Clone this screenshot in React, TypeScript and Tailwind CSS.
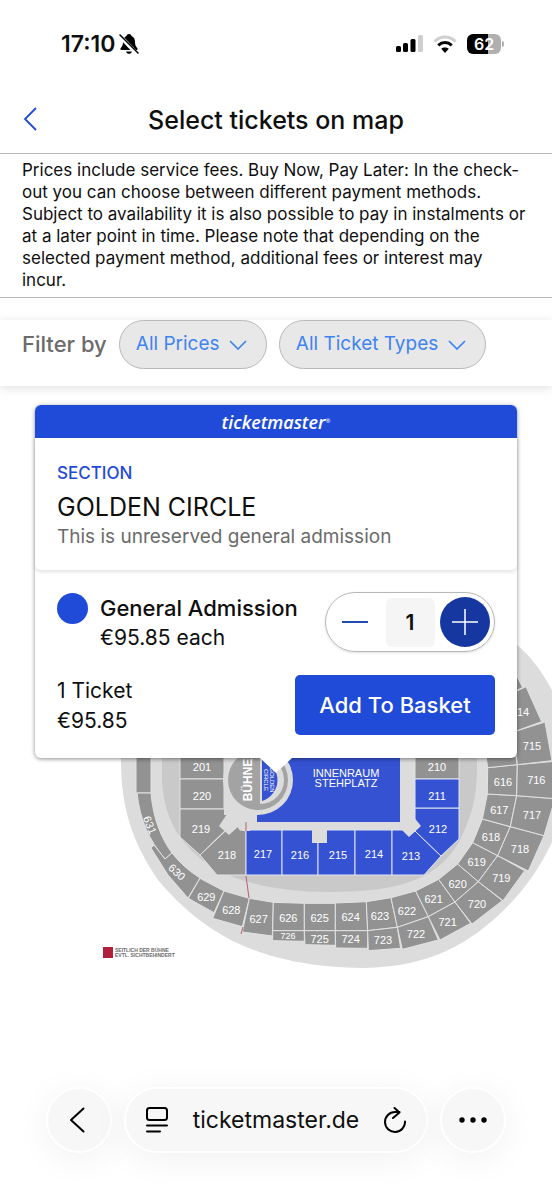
import { useState } from 'react';

const PRICE = 95.85;

type Block = {
    id: string;
    points: string;
    x: number;
    y: number;
    size?: number;
};

// west side of the upper tier, in thirds of a map unit
const westBlocks: Block[] = [
    { id: '629', points: '330,415 402,453 372,518 295,475', x: 349, y: 471 },
    { id: '628', points: '402,453 478,475 457,560 368,535', x: 424, y: 512 },
    { id: '627', points: '478,475 550,487 547,588 457,576', x: 506, y: 538 },
    { id: '626', points: '550,487 643,490 643,572 548,572', x: 595, y: 534 },
    { id: '726', points: '548,572 643,572 643,604 548,602', x: 594, y: 585, size: 27 },
    { id: '625', points: '643,490 736,490 736,572 643,572', x: 689, y: 534 },
    { id: '725', points: '643,572 736,572 736,616 645,614', x: 689, y: 597 },
];

// east side of the upper tier, in thirds of a map unit
const eastBlocks: Block[] = [
    { id: '624', points: '46,489 139,485 143,572 46,572', x: 92, y: 532 },
    { id: '724', points: '46,572 143,572 143,625 47,624', x: 92, y: 598 },
    { id: '623', points: '139,485 213,473 232,562 143,572', x: 180, y: 528 },
    { id: '723', points: '143,572 232,562 242,625 145,632', x: 189, y: 600 },
    { id: '622', points: '213,473 287,453 325,530 232,562', x: 261, y: 513 },
    { id: '722', points: '232,562 325,530 355,600 247,628', x: 288, y: 583 },
    { id: '621', points: '287,453 356,418 405,486 325,530', x: 341, y: 478 },
    { id: '721', points: '325,530 405,486 452,550 360,600', x: 383, y: 546 },
    { id: '620', points: '356,418 413,372 475,425 405,486', x: 413, y: 432 },
    { id: '720', points: '405,486 475,425 547,482 456,552', x: 471, y: 492 },
    { id: '619', points: '413,372 458,308 533,347 475,425', x: 470, y: 367 },
    { id: '719', points: '475,425 533,347 614,392 549,482', x: 544, y: 416 },
    { id: '618', points: '458,308 487,237 571,260 533,347', x: 513, y: 291 },
    { id: '718', points: '533,347 571,260 672,287 625,393', x: 600, y: 327 },
    { id: '617', points: '487,237 502,162 590,167 571,260', x: 538, y: 210 },
    { id: '717', points: '571,260 590,167 705,176 672,287', x: 636, y: 226 },
    { id: '616', points: '502,162 503,83 592,74 590,167', x: 549, y: 126 },
    { id: '716', points: '590,167 592,74 705,64 705,176', x: 649, y: 122 },
    { id: '615', points: '503,83 494,20 580,0 592,74', x: 541, y: 38 },
    { id: '715', points: '592,74 580,-24 675,-54 696,62', x: 636, y: 18 },
    { id: '714', points: '580,-24 555,-130 618,-160 665,-55', x: 600, y: -82 },
    { id: '713', points: '555,-130 520,-230 560,-250 608,-158', x: 560, y: -190 },
];

const innerBlocks: Block[] = [
    { id: '201', points: '180,750 224,750 224,779 180,779', x: 202, y: 767 },
    { id: '220', points: '180,779 224,779 224,809 180,809', x: 202, y: 796 },
    { id: '219', points: '180,809 224,809 236,820 200,855 180,837', x: 201, y: 829 },
    { id: '218', points: '200,855 235,822 240,830 246,830 246,875 217,875', x: 227, y: 855 },
    { id: '210', points: '415,750 459,750 459,779 415,779', x: 437, y: 767 },
];

const freeBlocks: Block[] = [
    { id: '217', points: '246,830 282,830 282,875 246,875', x: 263, y: 854 },
    { id: '216', points: '282,830 318,830 318,875 282,875', x: 300, y: 855 },
    { id: '215', points: '318,830 355,830 355,875 318,875', x: 338, y: 855 },
    { id: '214', points: '355,830 392,830 392,875 355,875', x: 374, y: 854 },
    { id: '213', points: '392,830 402,830 415,831 441,856 424,875 392,875', x: 411, y: 856 },
    { id: '212', points: '415,808 459,808 459,839 441,856 415,831', x: 438, y: 829 },
    { id: '211', points: '415,779 459,779 459,808 415,808', x: 437, y: 796 },
];

function Tier({ blocks }: { blocks: Block[] }) {
    return (
        <>
            <g fill="#929292" stroke="#e2e2e2" strokeWidth="3">
                {blocks.map((b) => <polygon key={b.id} points={b.points} />)}
            </g>
            <g fill="#fff" textAnchor="middle">
                {blocks.map((b) => (
                    <text key={b.id} x={b.x} y={b.y + 11} fontSize={b.size ?? 33}>{b.id}</text>
                ))}
            </g>
        </>
    );
}

function VenueMap() {
    return (
        <svg
            viewBox="0 386 552 600"
            className="w-full font-['Liberation_Sans',sans-serif] [grid-area:1/1]"
            role="img"
            aria-label="Seating plan"
        >
            <path
                d="M121 750C120 800 128 836 158 880C197 926 250 967 363 968C430 967 470 944 507 907C535 878 556 845 570 790L570 730C556 694 540 664 517 645L400 600L200 640Z"
                fill="#dcdcdc"
            />
            <path
                d="M162 740V782C166 848 216 892 330 892C405 892 442 876 461 838C473 812 477 795 477 765V740Z"
                fill="#c9c9c9"
            />
            <path d="M224 740H415V831H224Z" fill="#dcdcdc" />

            <g stroke="#e2e2e2" strokeWidth="1" fill="#929292">
                {innerBlocks.map((b) => <polygon key={b.id} points={b.points} />)}
            </g>
            <g stroke="#dfe3f5" strokeWidth="1" fill="#3452d1">
                {freeBlocks.map((b) => <polygon key={b.id} points={b.points} />)}
            </g>
            <g fill="#dcdcdc">
                <path d="M225 811L227 814L219 826L229 835L239 826L242 831H250V815H236Z" />
                <path d="M400 828L409 837L421 826L413 816V808H400Z" />
                <path d="M312 828H327V843H312Z" />
            </g>

            <path d="M257 750H400V822H257Z" fill="#3452d1" />
            <circle cx="258" cy="780" r="35" fill="#dcdcdc" />
            <path d="M224 740H258V815H224Z" fill="#dcdcdc" />
            <circle cx="258" cy="780" r="30" fill="#a3a3a3" />
            <path d="M260 756A24 24 0 0 1 260 804Z" fill="#dcdcdc" />
            <path d="M262 759A22 22 0 0 1 262 801Z" fill="#3452d1" />

            <g fill="#929292" stroke="#e2e2e2" strokeWidth="1">
                <path d="M136 740V793H151V740Z" />
                <path d="M137 793H151C153 818 161 838 172 853L165 859C149 840 140 820 137 793Z" />
                <path d="M151 848L154 845L165 859L172 853C180 863 189 871 200 878L188 898L168 875Z" />
            </g>
            <g transform="translate(90 740) scale(0.33333)"><Tier blocks={westBlocks} /></g>
            <g transform="translate(320 740) scale(0.33333)"><Tier blocks={eastBlocks} /></g>

            <path d="M246 822V831M246 876L249 898M243 927L241 934" stroke="#b5606f" strokeWidth="1" fill="none" />

            <g fill="#fff" fontSize="11" textAnchor="middle">
                {[...innerBlocks, ...freeBlocks].map((b) => (
                    <text key={b.id} x={b.x} y={b.y + 4}>{b.id}</text>
                ))}
                <text transform="translate(150 825) rotate(67)" y="4">631</text>
                <text transform="translate(177 872) rotate(42)" y="4">630</text>
                <text x="346" y="777">INNENRAUM</text>
                <text x="346" y="787">STEHPLATZ</text>
                <text transform="translate(248 780) rotate(-90)" y="4" fontSize="12" fontWeight="700">BÜHNE</text>
                <g fontSize="6">
                    <text transform="translate(272 780) rotate(90)" y="2">GOLDEN</text>
                    <text transform="translate(266 780) rotate(90)" y="2">CIRCLE</text>
                </g>
            </g>

            <rect x="103" y="947" width="10" height="11" fill="#b01f3c" />
            <g fill="#6b6b6b" fontSize="5" fontWeight="700">
                <text x="115" y="952">SEITLICH DER BÜHNE</text>
                <text x="115" y="957">EVTL. SICHTBEHINDERT</text>
            </g>
        </svg>
    );
}

function StatusBar() {
    return (
        <div className="flex h-[88px] items-center justify-between pr-12 pl-[61px]">
            <div className="flex items-center gap-1">
                <span className="text-[23px] font-semibold">17:10</span>
                <svg viewBox="0 0 20 22" className="h-[22px] w-5" aria-hidden="true">
                    <path
                        d="M10 1C8.600 1 7.700 1.900 7.500 3C5 4 4 6.300 4 9C4 12 3.200 13.500 1.800 15C1 16 1.300 17 2.500 17H17.500C18.700 17 19 16 18.200 15C16.800 13.500 16 12 16 9C16 6.300 15 4 12.500 3C12.300 1.900 11.400 1 10 1ZM7 18.500C7.500 20 8.600 20.800 10 20.800S12.500 20 13 18.500Z"
                        fill="#000"
                    />
                    <path d="M0 2L18 21" stroke="#fff" strokeWidth="4" />
                    <path d="M1 2L19 20" stroke="#000" strokeWidth="1.500" strokeLinecap="round" />
                </svg>
            </div>
            <div className="flex items-center gap-[10px]">
                <svg viewBox="0 0 27 18" className="h-[18px] w-[27px]" aria-hidden="true">
                    <rect x="0" y="11" width="5" height="6" rx="1.500" />
                    <rect x="7" y="8" width="5" height="9" rx="1.500" />
                    <rect x="14.500" y="4" width="5" height="13" rx="1.500" />
                    <rect x="22" y="0" width="5" height="17" rx="1.500" fill="#cfcfcf" />
                </svg>
                <svg viewBox="0 0 24 18" className="h-[18px] w-6" fill="none" strokeWidth="3" aria-hidden="true">
                    <path d="M1.500 6.500C7.500 0.500 16.500 0.500 22.500 6.500" stroke="#cfcfcf" />
                    <path d="M5.300 10.300C9.300 6.600 14.700 6.600 18.700 10.300" stroke="#000" />
                    <path d="M12 18L8.200 13.800C10.300 12 13.700 12 15.800 13.800Z" fill="#000" />
                </svg>
                <div className="flex items-center gap-px">
                    <div className="flex h-5 w-[34px] items-center justify-center rounded-md bg-linear-to-r from-black from-62% to-[#b0b0b0] to-62% text-base font-semibold text-white">
                        62
                    </div>
                    <div className="h-[6px] w-[2px] rounded-r-full bg-[#b0b0b0]" />
                </div>
            </div>
        </div>
    );
}

function FilterSelect({ label }: { label: string }) {
    return (
        <div className="relative">
            <select
                aria-label={label}
                className="block h-[49px] appearance-none rounded-full border border-[#b8b8b8] bg-[#e8e8e8] pr-[46px] pl-4 text-[19px] text-[#3f83f0]"
            >
                <option>{label}</option>
            </select>
            <svg viewBox="0 0 18 10" className="pointer-events-none absolute top-5 right-5 h-[10px] w-[18px]" fill="none" aria-hidden="true">
                <path d="M1 1L9 9L17 1" stroke="#3f83f0" strokeWidth="1.700" />
            </svg>
        </div>
    );
}

function TicketCard() {
    const [qty, setQty] = useState(1);

    return (
        <div className="relative mx-[35px] mt-[19px] self-start rounded-md bg-white shadow-[0_1px_4px_rgba(0,0,0,0.45)] [grid-area:1/1]">
            <div className="flex h-[33px] items-center justify-center rounded-t-md bg-[#1f4bd8] font-['Open_Sans',sans-serif] text-white">
                <span className="text-lg leading-none font-semibold italic">ticketmaster</span>
                <span className="text-[6px]">®</span>
            </div>
            <div className="h-[132px] rounded-b-md px-[22px] pt-[23px] shadow-[0_2px_4px_rgba(0,0,0,0.12)]">
                <p className="text-[17px] leading-6 font-medium text-[#1f4bd8]">SECTION</p>
                <h2 className="mt-1 text-[25px] leading-9">GOLDEN CIRCLE</h2>
                <p className="text-[19px] leading-6 text-[#6b6b6b]">This is unreserved general admission</p>
            </div>
            <div className="px-[22px] py-[22px]">
                <div className="flex items-start justify-between">
                    <div className="flex gap-3">
                        <span className="mt-px size-[31px] rounded-full bg-[#1f4bd8]" />
                        <div className="pt-px text-[21px] leading-[30px]">
                            <p className="text-[22px] font-medium">General Admission</p>
                            <p>€{PRICE} each</p>
                        </div>
                    </div>
                    <div className="flex h-[60px] w-[170px] items-center justify-between rounded-full border border-[#b8b8b8] px-1 shadow-sm">
                        <button
                            type="button"
                            aria-label="Remove ticket"
                            className="flex size-[50px] items-center justify-center"
                            onClick={() => setQty(Math.max(0, qty - 1))}
                        >
                            <svg viewBox="0 0 26 26" className="size-[26px]" aria-hidden="true">
                                <path d="M0 13H26" stroke="#1f4bb0" strokeWidth="2" />
                            </svg>
                        </button>
                        <input
                            aria-label="Quantity"
                            className="h-[49px] w-[49px] rounded-md bg-[#f5f5f5] text-center text-[21px] font-semibold"
                            value={qty}
                            onChange={(e) => setQty(Number(e.target.value) || 0)}
                        />
                        <button
                            type="button"
                            aria-label="Add ticket"
                            className="flex size-[50px] items-center justify-center rounded-full bg-[#16379f]"
                            onClick={() => setQty(qty + 1)}
                        >
                            <svg viewBox="0 0 26 26" className="size-[26px]" aria-hidden="true">
                                <path d="M0 13H26M13 0V26" stroke="#fff" strokeWidth="1.500" />
                            </svg>
                        </button>
                    </div>
                </div>
                <div className="mt-[21px] flex items-center justify-between">
                    <div className="pt-[2px] text-[21px] leading-[30px]">
                        <p>{qty} Ticket</p>
                        <p>€{(qty * PRICE).toFixed(2)}</p>
                    </div>
                    <button type="button" className="h-[60px] w-[200px] rounded-[5px] bg-[#1f4bd8] text-[22px] font-medium text-white">
                        Add To Basket
                    </button>
                </div>
            </div>
            <svg viewBox="0 0 32 15" className="absolute top-full left-1/2 h-[15px] w-8 -translate-x-1/2" aria-hidden="true">
                <path d="M0 0H32L16 15Z" fill="#fff" />
            </svg>
        </div>
    );
}

function BrowserBar() {
    const pill = 'h-[66px] rounded-full border-2 border-white bg-[#f7f7f7] shadow-[0_6px_36px_rgba(0,0,0,0.06)]';

    return (
        <nav className="flex justify-center gap-3 px-[46px] pb-[47px]">
            <button type="button" aria-label="Back" className={`${pill} flex w-[66px] shrink-0 items-center justify-center pr-1`}>
                <svg viewBox="0 0 16 26" className="h-[26px] w-4" fill="none" aria-hidden="true">
                    <path d="M14.500 1.500L2 13L14.500 24.500" stroke="#000" strokeWidth="2" strokeLinecap="round" strokeLinejoin="round" />
                </svg>
            </button>
            <div className={`${pill} flex flex-1 items-center justify-between px-5`}>
                <button type="button" aria-label="Page menu">
                    <svg viewBox="0 0 22 26" className="h-[26px] w-[22px]" fill="none" stroke="#000" strokeWidth="2" strokeLinecap="round" aria-hidden="true">
                        <rect x="1" y="1" width="20" height="12" rx="2.500" />
                        <path d="M1 18.500H21M1 24.500H14" />
                    </svg>
                </button>
                <a href="#" className="text-[23px]">ticketmaster.de</a>
                <button type="button" aria-label="Reload">
                    <svg viewBox="0 0 22 26" className="h-[26px] w-[22px]" fill="none" stroke="#000" strokeWidth="2" strokeLinecap="round" strokeLinejoin="round" aria-hidden="true">
                        <path d="M21 14.500A10 10 0 1 1 11 5H15.500M10.500 1L15.500 5.500L9 11" />
                    </svg>
                </button>
            </div>
            <button type="button" aria-label="More" className={`${pill} flex w-[66px] shrink-0 items-center justify-center`}>
                <svg viewBox="0 0 28 6" className="h-[6px] w-7" aria-hidden="true">
                    <circle cx="3" cy="3" r="2.700" />
                    <circle cx="14" cy="3" r="2.700" />
                    <circle cx="25" cy="3" r="2.700" />
                </svg>
            </button>
        </nav>
    );
}

export default function App() {
    return (
        <div className="flex min-h-screen flex-col bg-white font-['Inter','Liberation_Sans',sans-serif] text-[#0f0f0f]">
            <StatusBar />
            <header className="grid h-[65px] grid-cols-[40px_1fr_40px] items-center px-[22px]">
                <button type="button" aria-label="Back" className="pb-1 pl-px">
                    <svg viewBox="0 0 14 24" className="h-6 w-[14px]" fill="none" aria-hidden="true">
                        <path d="M13 1L2 12L13 23" stroke="#1f4bd8" strokeWidth="1.800" />
                    </svg>
                </button>
                <h1 className="text-center text-[25px] font-medium">Select tickets on map</h1>
            </header>
            <p className="border-y border-[#b8b8b8] pt-[5px] pr-6 pb-[6px] pl-[22px] text-[17px] leading-[22px]">
                Prices include service fees. Buy Now, Pay Later: In the check-out you can choose between different
                payment methods. Subject to availability it is also possible to pay in instalments or at a later
                point in time. Please note that depending on the selected payment method, additional fees or
                interest may incur.
            </p>
            <div className="mt-[22px] flex items-center gap-3 px-[22px] pb-[17px] shadow-[0_2px_10px_rgba(0,0,0,0.13)]">
                <span className="text-[22px] font-medium text-[#6b6b6b]">Filter by</span>
                <FilterSelect label="All Prices" />
                <FilterSelect label="All Ticket Types" />
            </div>
            <main className="grid flex-1 content-start">
                <VenueMap />
                <TicketCard />
            </main>
            <BrowserBar />
        </div>
    );
}
